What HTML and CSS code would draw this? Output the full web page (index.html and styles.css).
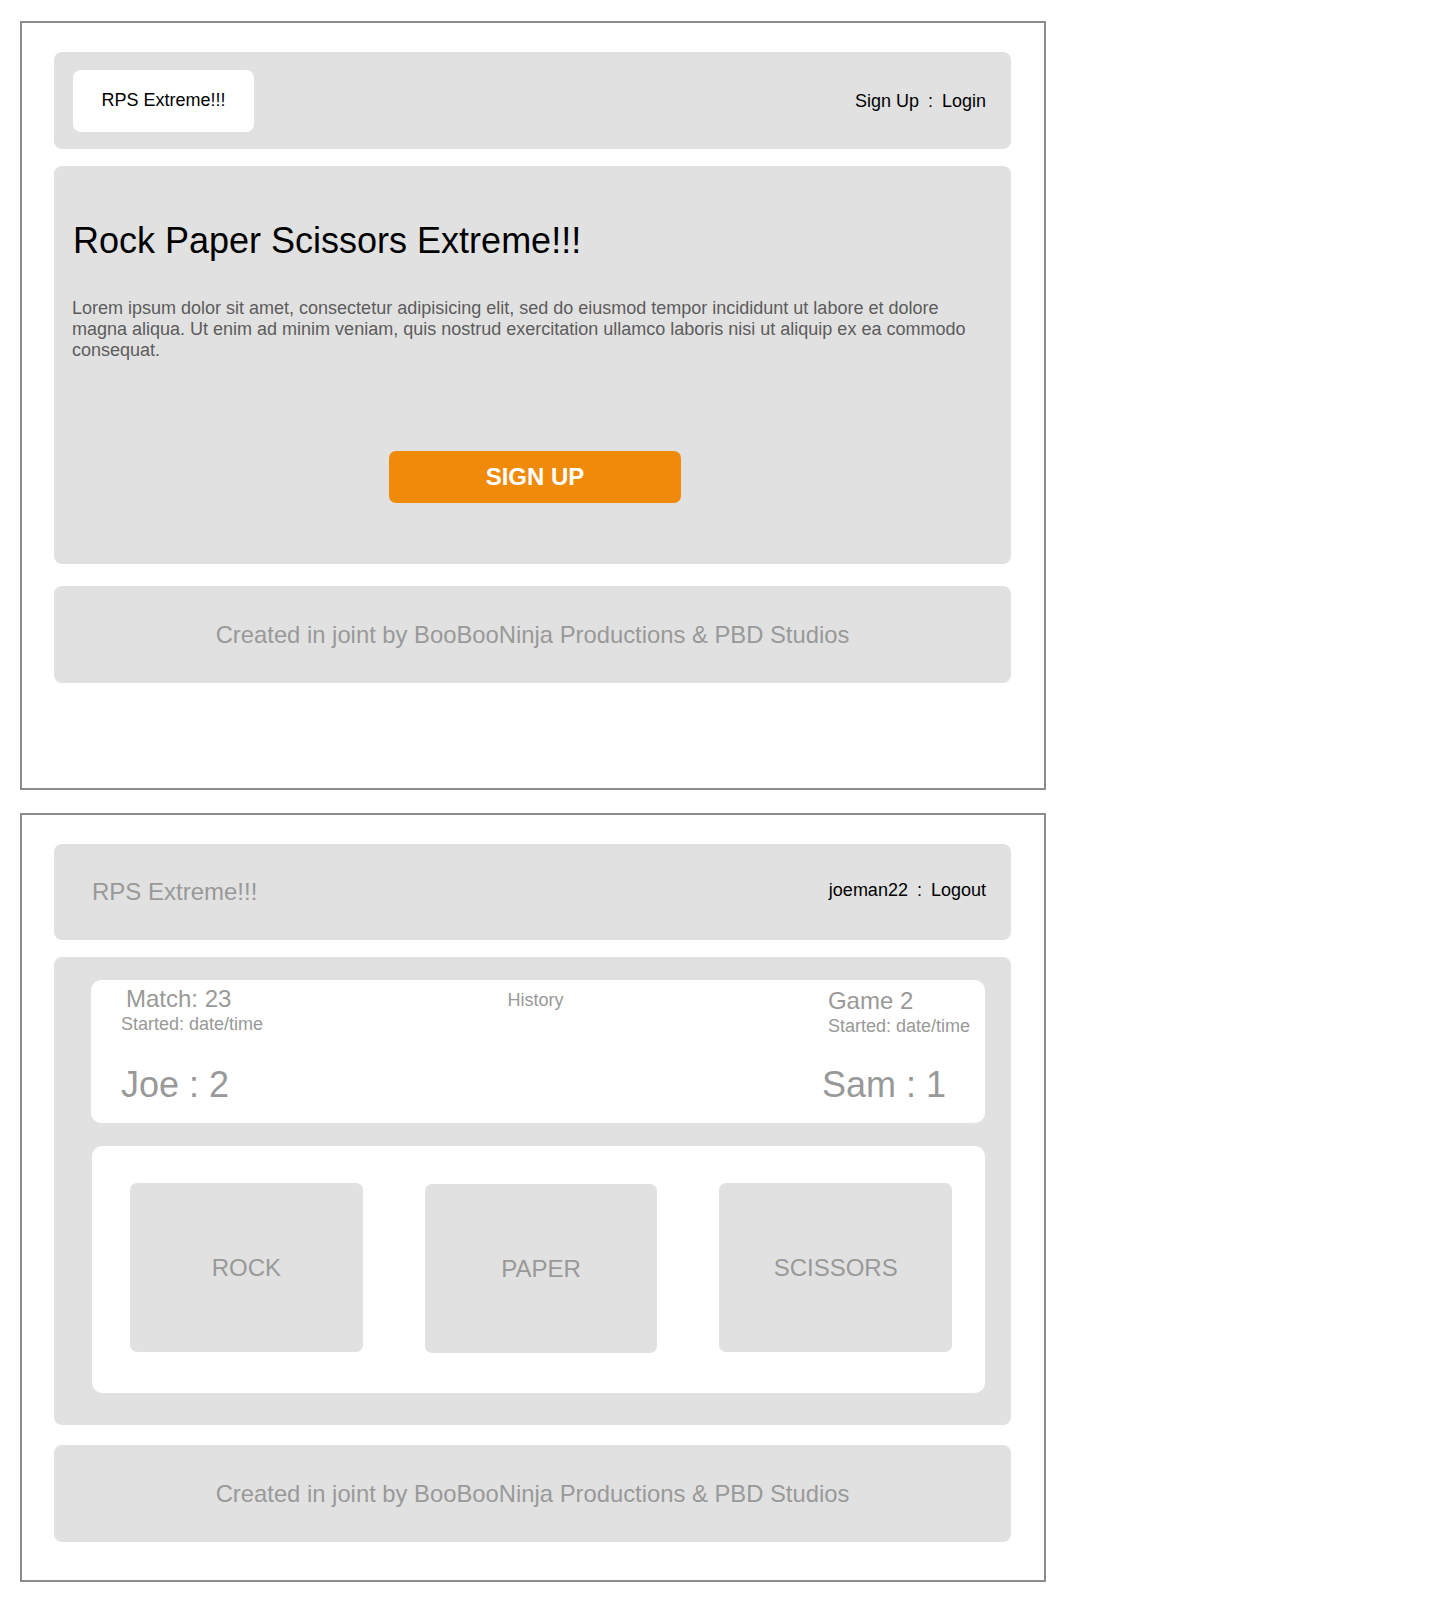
FILE: index.html
```html
<!DOCTYPE html>
<html lang="en">
<head>
<meta charset="utf-8">
<title>RPS Extreme!!! — Wireframes</title>
<link rel="stylesheet" href="styles.css">
</head>
<body>
<div class="page">
  <section class="frame">
    <header class="bar bar-home">
      <div class="logo">RPS Extreme!!!</div>
      <nav class="nav"><span>Sign Up</span><span class="sep">:</span><span>Login</span></nav>
    </header>
    <main class="panel hero">
      <h1 class="hero-title">Rock Paper Scissors Extreme!!!</h1>
      <p class="hero-text">Lorem ipsum dolor sit amet, consectetur adipisicing elit, sed do eiusmod tempor incididunt ut labore et dolore magna aliqua. Ut enim ad minim veniam, quis nostrud exercitation ullamco laboris nisi ut aliquip ex ea commodo consequat.</p>
      <button class="cta" type="button">SIGN UP</button>
    </main>
    <footer class="bar foot">Created in joint by BooBooNinja Productions &amp; PBD Studios</footer>
  </section>

  <section class="frame">
    <header class="bar bar-game">
      <div class="brand">RPS Extreme!!!</div>
      <nav class="nav nav-game"><span>joeman22</span><span class="sep">:</span><span>Logout</span></nav>
    </header>
    <main class="panel game">
      <div class="score">
        <div class="col col-left">
          <div class="big big-left">Match: 23</div>
          <div class="small">Started: date/time</div>
          <div class="tally">Joe : 2</div>
        </div>
        <div class="history">History</div>
        <div class="col col-right">
          <div class="big">Game 2</div>
          <div class="small">Started: date/time</div>
          <div class="tally tally-right">Sam : 1</div>
        </div>
      </div>
      <div class="choices">
        <div class="card">ROCK</div>
        <div class="card card-mid">PAPER</div>
        <div class="card">SCISSORS</div>
      </div>
    </main>
    <footer class="bar foot">Created in joint by BooBooNinja Productions &amp; PBD Studios</footer>
  </section>
</div>
</body>
</html>
```

FILE: styles.css
```css
* {
  box-sizing: border-box;
}

body {
  margin: 0;
  background: #ffffff;
  font-family: "Liberation Sans", Arial, Helvetica, sans-serif;
  color: #000000;
}

.page {
  display: flex;
  flex-direction: column;
  align-items: flex-start;
  gap: 23px;
  padding: 21px 0 0 20px;
}

.frame {
  width: 1026px;
  height: 769px;
  border: 2px solid #8c8c8c;
  padding: 29px 33px 0 32px;
  display: flex;
  flex-direction: column;
}

.bar {
  background: #e1e1e1;
  border-radius: 8px;
  display: flex;
  align-items: center;
}

.bar-home {
  height: 97px;
  justify-content: space-between;
  padding: 0 25px 0 19px;
}

.logo {
  width: 181px;
  height: 62px;
  background: #ffffff;
  border-radius: 8px;
  display: flex;
  align-items: center;
  justify-content: center;
  font-size: 18px;
  color: #000000;
}

.nav {
  display: flex;
  font-size: 18px;
  color: #000000;
  margin-top: 1px;
}

.sep {
  margin: 0 9px;
}

.nav-game {
  margin-top: -4px;
}

.panel {
  background: #e1e1e1;
  border-radius: 8px;
}

.hero {
  margin-top: 17px;
  padding: 54px 26px 61px 19px;
}

.hero-title {
  margin: 0;
  font-size: 36px;
  line-height: 41px;
  font-weight: normal;
  color: #000000;
}

.hero-text {
  margin: 37px 0 0 -1px;
  font-size: 18px;
  line-height: 21px;
  color: #5c5c5c;
}

.cta {
  display: block;
  margin: 90px 0 0 316px;
  width: 292px;
  height: 52px;
  border: 0;
  border-radius: 7px;
  background: #f08a0b;
  color: #ffffff;
  font-family: inherit;
  font-size: 24px;
  font-weight: bold;
  cursor: pointer;
}

.foot {
  margin-top: 22px;
  height: 97px;
  justify-content: center;
  font-size: 23.8px;
  color: #999999;
}

.bar-game {
  height: 96px;
  justify-content: space-between;
  padding: 0 25px 0 38px;
}

.brand {
  font-size: 24px;
  color: #999999;
}

.game {
  margin-top: 17px;
  padding: 23px 26px 32px 37px;
}

.game + .foot {
  margin-top: 20px;
}

.score {
  height: 143px;
  background: #ffffff;
  border-radius: 10px;
  padding: 5px 15px 0 30px;
  display: grid;
  grid-template-columns: 1fr auto 1fr;
  color: #999999;
}

.col {
  display: flex;
  flex-direction: column;
  align-items: flex-start;
}

.col-right {
  justify-self: end;
  margin-top: 2px;
}

.big {
  font-size: 24px;
  line-height: 27px;
}

.big-left {
  margin-left: 5px;
}

.small {
  margin-top: 2px;
  font-size: 18px;
  line-height: 21px;
}

.tally {
  margin-top: 29px;
  font-size: 36px;
  line-height: 41px;
}

.tally-right {
  margin-left: -6px;
  margin-top: 27px;
}

.history {
  margin: 5px 20px 0 0;
  font-size: 18px;
  line-height: 21px;
}

.choices {
  margin: 23px 0 0 1px;
  height: 247px;
  background: #ffffff;
  border-radius: 10px;
  padding: 37px 33px 41px 38px;
  display: flex;
  gap: 62px;
}

.card {
  width: 233px;
  height: 169px;
  background: #e1e1e1;
  border-radius: 7px;
  display: flex;
  align-items: center;
  justify-content: center;
  font-size: 24px;
  color: #999999;
}

.card-mid {
  margin-top: 1px;
}
```
